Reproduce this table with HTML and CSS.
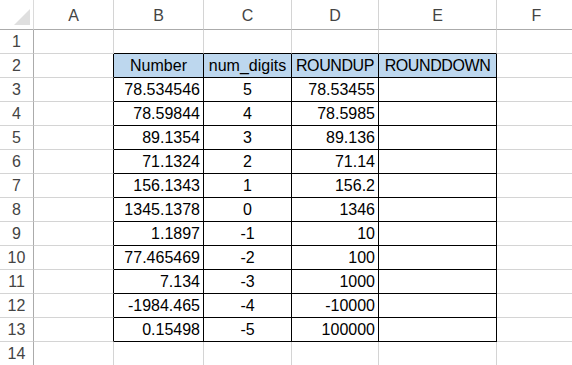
FILE: index.html
```html
<!DOCTYPE html>
<html>
<head>
<meta charset="utf-8">
<link rel="stylesheet" href="styles.css">
</head>
<body>
<div class="sheet">
  <div class="c corner"><span class="tri"></span></div>
  <div class="c hd">A</div><div class="c hd">B</div><div class="c hd">C</div><div class="c hd">D</div><div class="c hd">E</div><div class="c hd">F</div>

  <div class="c rh">1</div><div class="c"></div><div class="c above"></div><div class="c above"></div><div class="c above"></div><div class="c above"></div><div class="c"></div>

  <div class="c rh">2</div><div class="c left"></div><div class="c t th">Number</div><div class="c t th">num_digits</div><div class="c t th caps">ROUNDUP</div><div class="c t th caps">ROUNDDOWN</div><div class="c"></div>

  <div class="c rh">3</div><div class="c left"></div><div class="c t r">78.534546</div><div class="c t m">5</div><div class="c t r">78.53455</div><div class="c t"></div><div class="c"></div>
  <div class="c rh">4</div><div class="c left"></div><div class="c t r">78.59844</div><div class="c t m">4</div><div class="c t r">78.5985</div><div class="c t"></div><div class="c"></div>
  <div class="c rh">5</div><div class="c left"></div><div class="c t r">89.1354</div><div class="c t m">3</div><div class="c t r">89.136</div><div class="c t"></div><div class="c"></div>
  <div class="c rh">6</div><div class="c left"></div><div class="c t r">71.1324</div><div class="c t m">2</div><div class="c t r">71.14</div><div class="c t"></div><div class="c"></div>
  <div class="c rh">7</div><div class="c left"></div><div class="c t r">156.1343</div><div class="c t m">1</div><div class="c t r">156.2</div><div class="c t"></div><div class="c"></div>
  <div class="c rh">8</div><div class="c left"></div><div class="c t r">1345.1378</div><div class="c t m">0</div><div class="c t r">1346</div><div class="c t"></div><div class="c"></div>
  <div class="c rh">9</div><div class="c left"></div><div class="c t r">1.1897</div><div class="c t m">-1</div><div class="c t r">10</div><div class="c t"></div><div class="c"></div>
  <div class="c rh">10</div><div class="c left"></div><div class="c t r">77.465469</div><div class="c t m">-2</div><div class="c t r">100</div><div class="c t"></div><div class="c"></div>
  <div class="c rh">11</div><div class="c left"></div><div class="c t r">7.134</div><div class="c t m">-3</div><div class="c t r">1000</div><div class="c t"></div><div class="c"></div>
  <div class="c rh">12</div><div class="c left"></div><div class="c t r">-1984.465</div><div class="c t m">-4</div><div class="c t r">-10000</div><div class="c t"></div><div class="c"></div>
  <div class="c rh">13</div><div class="c left"></div><div class="c t r">0.15498</div><div class="c t m">-5</div><div class="c t r">100000</div><div class="c t"></div><div class="c"></div>

  <div class="c rh">14</div><div class="c"></div><div class="c"></div><div class="c"></div><div class="c"></div><div class="c"></div><div class="c"></div>
</div>
</body>
</html>
```
FILE: styles.css
```css
html, body {
  margin: 0;
  padding: 0;
  background: #ffffff;
}
body {
  font-family: "Liberation Sans", Arial, sans-serif;
  font-size: 16px;
  color: #000000;
  overflow: hidden;
}
.sheet {
  display: grid;
  grid-template-columns: 34px 80px 90px 88px 87px 118px 80px;
  grid-template-rows: 30px repeat(14, 24px);
  width: 577px;
}
.c {
  box-sizing: border-box;
  border-right: 1px solid #d4d4d4;
  border-bottom: 1px solid #d4d4d4;
  line-height: 23px;
  white-space: nowrap;
  overflow: hidden;
}
.corner {
  position: relative;
  border-right-color: #dadada;
  border-bottom-color: #ababab;
}
.tri {
  position: absolute;
  right: 3px;
  bottom: 4px;
  width: 0;
  height: 0;
  border-left: 16px solid transparent;
  border-bottom: 16px solid #dfdfdf;
}
.hd {
  text-align: center;
  color: #444444;
  line-height: 26px;
  padding-top: 3px;
  border-bottom-color: #ababab;
}
.rh {
  text-align: center;
  color: #444444;
  border-right-color: #ababab;
  padding-top: 1px;
  line-height: 22px;
}
.above {
  border-bottom-color: #000000;
}
.left {
  border-right-color: #000000;
}
.t {
  border-right-color: #000000;
  border-bottom-color: #000000;
  padding: 0 3px;
}
.th {
  background: #bdd7ee;
  text-align: center;
  padding: 0 1px;
}
.caps {
  letter-spacing: -0.4px;
}
.r {
  text-align: right;
}
.m {
  text-align: center;
}
```
